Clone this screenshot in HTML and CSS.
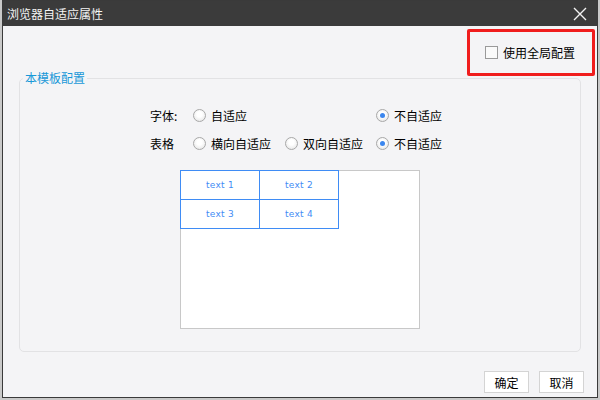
FILE: index.html
```html
<!DOCTYPE html>
<html lang="zh-CN">
<head>
    <meta charset="UTF-8">
    <title>浏览器自适应属性</title>
    <link rel="stylesheet" href="styles.css">
</head>
<body>
    <div class="dialog">
        <div class="titlebar">
            <span class="title">浏览器自适应属性</span>
            <svg class="close" width="14" height="14" viewBox="0 0 14 14">
                <path d="M1 1 L13 13 M13 1 L1 13" stroke="#f2f2f2" stroke-width="1.4" fill="none"/>
            </svg>
        </div>
        <div class="content">
            <div class="global">
                <label class="check-label"><span class="checkbox"></span>使用全局配置</label>
            </div>

            <fieldset class="panel">
                <legend>本模板配置</legend>
                <div class="options">
                    <span class="opt-name">字体:</span>
                    <label class="radio-label"><span class="radio"></span>自适应</label>
                    <span></span>
                    <label class="radio-label"><span class="radio checked"></span>不自适应</label>

                    <span class="opt-name">表格</span>
                    <label class="radio-label"><span class="radio"></span>横向自适应</label>
                    <label class="radio-label"><span class="radio"></span>双向自适应</label>
                    <label class="radio-label"><span class="radio checked"></span>不自适应</label>
                </div>

                <div class="preview">
                    <table class="sample">
                        <tr><td>text 1</td><td>text 2</td></tr>
                        <tr><td>text 3</td><td>text 4</td></tr>
                    </table>
                </div>
            </fieldset>

            <div class="footer">
                <button class="btn">确定</button>
                <button class="btn">取消</button>
            </div>
        </div>
    </div>
</body>
</html>
```

FILE: styles.css
```css
html, body {
    margin: 0;
    padding: 0;
}

body {
    background-color: #c9c9c9;
    font-family: "Noto Sans CJK SC", "Liberation Sans", sans-serif;
    font-size: 12px;
    color: #111;
    width: 600px;
    height: 400px;
    overflow: hidden;
}

.dialog {
    margin-left: 2px;
    width: 594px;
    height: 396px;
    border: 1px solid #3a3a3a;
    background-color: #f4f4f6;
    display: flex;
    flex-direction: column;
}

.titlebar {
    height: 25px;
    background-color: #3b3b3b;
    display: flex;
    align-items: center;
    justify-content: space-between;
    padding: 0 10px 0 4px;
}

.title {
    color: #f4f4f4;
    font-size: 12px;
}

.content {
    flex: 1;
    display: flex;
    flex-direction: column;
}

.global {
    align-self: flex-end;
    margin: 3px 2px -4px 0;
    width: 122px;
    height: 41px;
    border: 3px solid #f01d1d;
    border-radius: 2px;
    display: flex;
    align-items: center;
}

.check-label {
    display: flex;
    align-items: center;
    margin-left: 15px;
    font-size: 12px;
    color: #000;
}

.checkbox {
    width: 11px;
    height: 11px;
    border: 1px solid #9a9a9a;
    background-color: #fafafa;
    margin-right: 5px;
}

.panel {
    margin: 0 16px;
    padding: 0 0 22px 0;
    border: 1px solid #e2e2e4;
    border-radius: 5px;
}

.panel legend {
    margin-left: 3px;
    padding: 0 2px;
    color: #1898d8;
    font-size: 12px;
    line-height: 12px;
}

.options {
    display: grid;
    grid-template-columns: 43px 92px 91px auto;
    grid-auto-rows: 28px;
    align-items: center;
    margin: 17px 0 0 130px;
    color: #000;
}

.radio-label {
    display: flex;
    align-items: center;
}

.radio {
    width: 11px;
    height: 11px;
    border: 1px solid #a8a8a8;
    border-radius: 50%;
    background: radial-gradient(circle at 50% 40%, #ffffff 30%, #e0e0e0 100%);
    margin-right: 5px;
    display: flex;
    align-items: center;
    justify-content: center;
}

.radio.checked::after {
    content: "";
    width: 5px;
    height: 5px;
    border-radius: 50%;
    background-color: #3b86ee;
}

.preview {
    margin: 13px 0 0 160px;
    width: 238px;
    height: 157px;
    border: 1px solid #c8c8c8;
    background-color: #fff;
}

.sample {
    border-collapse: collapse;
    margin: -1px 0 0 -1px;
}

.sample td {
    width: 78px;
    height: 28px;
    padding: 0;
    border: 1px solid #3f8cf5;
    text-align: center;
    color: #3f8cf5;
    font-family: "DejaVu Sans", sans-serif;
    font-size: 9px;
    letter-spacing: 0.3px;
}

.footer {
    display: flex;
    justify-content: flex-end;
    gap: 10px;
    margin: 19px 13px 0 0;
}

.btn {
    width: 45px;
    height: 22px;
    padding: 0;
    background-color: #fff;
    border: 1px solid #d4d4d4;
    font-family: "Noto Sans CJK SC", sans-serif;
    font-size: 12px;
    color: #000;
}
```
